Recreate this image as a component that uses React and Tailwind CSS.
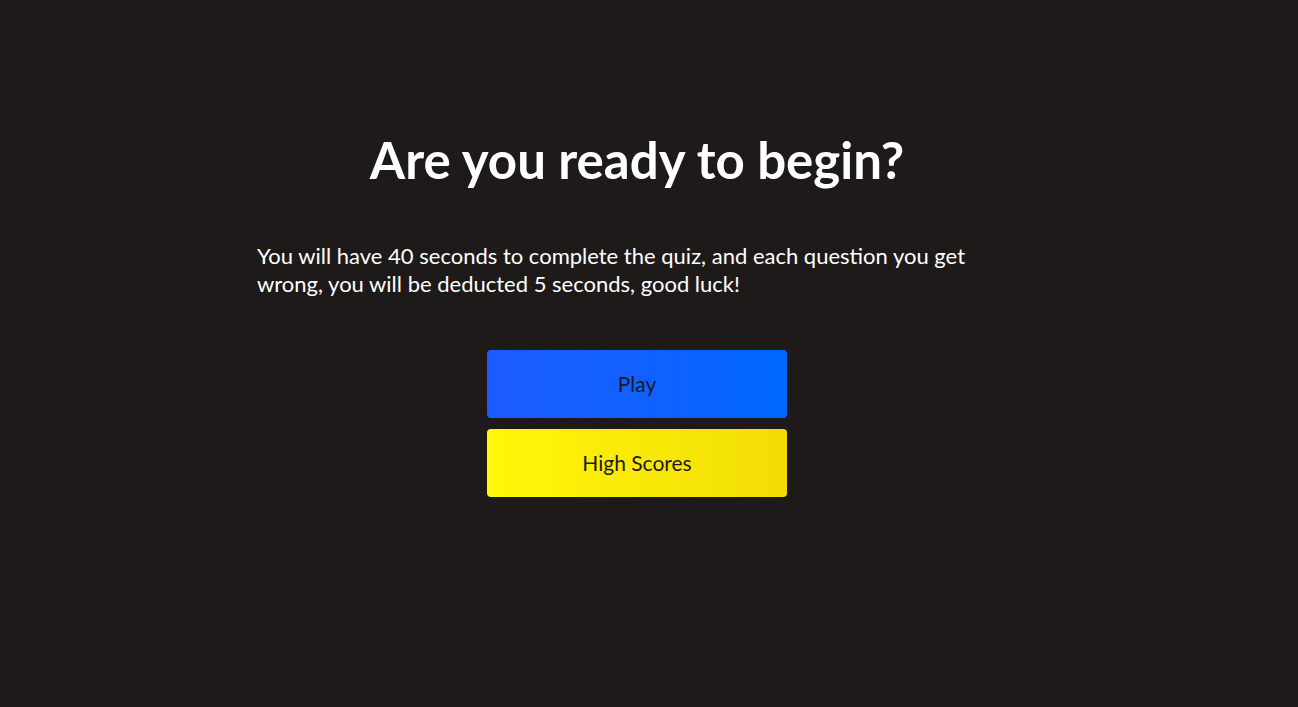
export default function App() {
  return (
    <main
      className="min-h-screen bg-[#1e1a19] text-white flex flex-col items-center pr-[24px]"
      style={{ fontFamily: "Lato, 'Open Sans', sans-serif" }}
    >
      <h1 className="mt-[128px] text-[51px] leading-[64px] font-bold text-center">Are you ready to begin?</h1>
      <p className="mt-[50px] w-[760px] text-[22px] leading-[28px]">
        You will have 40 seconds to complete the quiz, and each question you get wrong, you will be deducted 5 seconds, good luck!
      </p>
      <div className="mt-[52px] flex flex-col gap-[11px]">
        <button className="w-[300px] h-[68px] rounded-[4px] bg-gradient-to-r from-[#1a5bff] to-[#0066ff] text-[#1e1a19] text-[21px]">
          Play
        </button>
        <button className="w-[300px] h-[68px] rounded-[4px] bg-gradient-to-r from-[#fff70a] to-[#f2dc05] text-[#1e1a19] text-[21px]">
          High Scores
        </button>
      </div>
    </main>
  );
}
